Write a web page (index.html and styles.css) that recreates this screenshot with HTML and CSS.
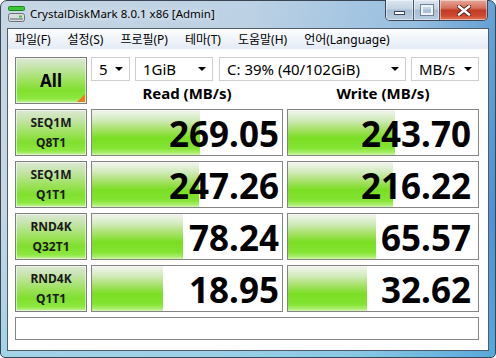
FILE: index.html
```html
<!DOCTYPE html>
<html lang="ko">
<head>
    <meta charset="UTF-8">
    <title>CrystalDiskMark 8.0.1 x86 [Admin]</title>
    <link rel="stylesheet" href="styles.css">
</head>
<body>
    <div class="window">
        <div class="titlebar">
            <svg class="app-icon" width="17" height="17" viewBox="0 0 17 17">
                <rect x="0.5" y="0.5" width="16" height="4" rx="1" fill="#3cc43c" stroke="#1e8a1e"/>
                <rect x="0.5" y="7.5" width="16" height="8" rx="2" fill="#d8dcdf" stroke="#6b7278"/>
                <rect x="2" y="12" width="13" height="2" fill="#9aa1a6"/>
                <rect x="11" y="9.5" width="3" height="2" fill="#3cc43c"/>
            </svg>
            <span class="title">CrystalDiskMark 8.0.1 x86 [Admin]</span>
            <div class="caption-buttons">
                <span class="cap-btn min"><i></i></span>
                <span class="cap-btn max"><i></i></span>
                <span class="cap-btn close">
                    <svg width="14" height="11" viewBox="0 0 14 11">
                        <path d="M2 1.5 L12 9.5 M12 1.5 L2 9.5" stroke="#4a2018" stroke-width="4.2" stroke-linecap="square"/>
                        <path d="M2 1.5 L12 9.5 M12 1.5 L2 9.5" stroke="#fff" stroke-width="2.4" stroke-linecap="square"/>
                    </svg>
                </span>
            </div>
        </div>

        <div class="client">
            <ul class="menubar">
                <li>파일(F)</li>
                <li>설정(S)</li>
                <li>프로필(P)</li>
                <li>테마(T)</li>
                <li>도움말(H)</li>
                <li>언어(Language)</li>
            </ul>

            <div class="board">
                <div class="label all">All</div>
                <div class="top">
                    <div class="combos">
                        <div class="combo c-count">5<span class="arrow"></span></div>
                        <div class="combo c-size">1GiB<span class="arrow"></span></div>
                        <div class="combo c-drive">C: 39% (40/102GiB)<span class="arrow"></span></div>
                        <div class="combo c-unit">MB/s<span class="arrow"></span></div>
                    </div>
                    <div class="heads">
                        <div class="head">Read (MB/s)</div>
                        <div class="head">Write (MB/s)</div>
                    </div>
                </div>

                <div class="label">SEQ1M<br>Q8T1</div>
                <div class="value read" style="--bar: 108px">269.05</div>
                <div class="value write" style="--bar: 107px">243.70</div>

                <div class="label">SEQ1M<br>Q1T1</div>
                <div class="value read" style="--bar: 107px">247.26</div>
                <div class="value write" style="--bar: 105px">216.22</div>

                <div class="label">RND4K<br>Q32T1</div>
                <div class="value read" style="--bar: 91px">78.24</div>
                <div class="value write" style="--bar: 88px">65.57</div>

                <div class="label">RND4K<br>Q1T1</div>
                <div class="value read" style="--bar: 71px">18.95</div>
                <div class="value write" style="--bar: 79px">32.62</div>

                <div class="comment"></div>
            </div>
        </div>
    </div>
</body>
</html>
```

FILE: styles.css
```css
body {
    margin: 0;
    padding: 0;
    font-family: "Noto Sans", "Noto Sans CJK KR", sans-serif;
    color: #000;
    background: #fff;
}

.window {
    width: 496px;
    height: 358px;
    box-sizing: border-box;
    border: 1px solid #3a4654;
    border-radius: 7px 7px 5px 5px;
    padding: 0 6px 6px 6px;
    background:
        linear-gradient(to bottom, rgba(255, 255, 255, 0) 60%, rgba(120, 210, 235, 0.45) 100%),
        linear-gradient(100deg, #c6d6e4 0%, #bcd1e4 45%, #96bfe0 75%, #5b9ad2 92%, #3f86cc 100%);
    display: flex;
    flex-direction: column;
}

/* title bar */
.titlebar {
    height: 27px;
    display: flex;
    align-items: center;
    padding-left: 1px;
}

.app-icon {
    margin-top: -1px;
}

.title {
    margin-left: 5px;
    font-size: 11.5px;
    margin-top: -2px;
    text-shadow: 0 0 6px rgba(255, 255, 255, 0.9);
}

.caption-buttons {
    margin-left: auto;
    margin-right: 1px;
    align-self: flex-start;
    margin-top: -1px;
    display: flex;
    height: 20px;
    border: 1px solid #3b4758;
    border-top: none;
    border-radius: 0 0 5px 5px;
    overflow: hidden;
}

.cap-btn {
    height: 20px;
    display: flex;
    align-items: center;
    justify-content: center;
    background: linear-gradient(to bottom, #dce6f0 0%, #c3d3e3 45%, #a7bed4 50%, #b9cde0 100%);
    box-shadow: inset 0 0 0 1px rgba(255, 255, 255, 0.45);
}

.cap-btn.min {
    width: 27px;
    border-right: 1px solid #4a5668;
}

.cap-btn.max {
    width: 25px;
    border-right: 1px solid #4a5668;
}

.cap-btn.close {
    width: 47px;
    background: linear-gradient(to bottom, #e6a79a 0%, #d7705c 40%, #c23a22 52%, #cf4a30 80%, #e07a5c 100%);
}

.cap-btn.min i {
    display: block;
    width: 9px;
    height: 2px;
    margin-top: 5px;
    background: #fff;
    border: 1px solid #3c4656;
}

.cap-btn.max i {
    display: block;
    width: 8px;
    height: 6px;
    border: 2px solid #eef3f8;
    outline: 1px solid #6f8196;
}

/* client area */
.client {
    flex: 1;
    border: 1px solid #505c6a;
    background: #fff;
    display: flex;
    flex-direction: column;
}

.menubar {
    list-style: none;
    margin: 0;
    padding: 0 0 0 6px;
    height: 20px;
    display: flex;
    align-items: center;
    gap: 15px;
    font-size: 12px;
    background: linear-gradient(to bottom, #fcfdfe 0%, #eef3f9 60%, #e4ebf4 100%);
}

.menubar li {
    padding: 0 1px;
}

.board {
    flex: 1;
    padding: 8px 7px 8px 7px;
    display: grid;
    grid-template-columns: 72px 192px 192px;
    grid-template-rows: 47px 47px 47px 47px 47px 23px;
    column-gap: 4px;
    row-gap: 5px;
}

.label {
    box-sizing: border-box;
    border: 1px solid #7d7d7d;
    box-shadow: inset 0 0 0 1px rgba(255, 255, 255, 0.55);
    background: linear-gradient(to bottom, #dde8d6 0%, #c0e4a0 25%, #9ee25e 50%, #80df2e 72%, #8ce83e 90%, #c4f09a 100%);
    display: flex;
    align-items: center;
    justify-content: center;
    text-align: center;
    font-weight: bold;
    font-size: 12px;
    line-height: 20px;
    color: #1a1a1a;
}

.label.all {
    position: relative;
    font-size: 17px;
    color: #000;
}

.label.all::after {
    content: "";
    position: absolute;
    right: 1px;
    bottom: 1px;
    border-style: solid;
    border-width: 0 0 8px 8px;
    border-color: transparent transparent #f07a1e transparent;
}

.top {
    grid-column: 2 / 4;
    display: flex;
    flex-direction: column;
}

.combos {
    height: 24px;
    display: flex;
}

.combo {
    box-sizing: border-box;
    height: 24px;
    border: 1px solid #cfcfcf;
    background: #fff;
    display: flex;
    align-items: center;
    padding: 0 6px 0 7px;
    font-size: 15px;
}

.c-count { width: 39px; }
.c-size { width: 78px; margin-left: 5px; }
.c-drive { width: 187px; margin-left: 6px; }
.c-unit { width: 68px; margin-left: 5px; }

.arrow {
    margin-left: auto;
    border-style: solid;
    border-width: 4px 4px 0 4px;
    border-color: #000 transparent transparent transparent;
}

.heads {
    flex: 1;
    display: grid;
    grid-template-columns: 192px 192px;
    column-gap: 4px;
}

.head {
    text-align: center;
    font-weight: bold;
    font-size: 15px;
    line-height: 23px;
    padding-top: 1px;
}

.value {
    box-sizing: border-box;
    border: 1px solid #858585;
    background-color: #fff;
    background-image: linear-gradient(to bottom, #f3f5f1 0%, #d2ebbc 22%, #a2e060 45%, #7ade24 62%, #84e432 85%, #a8ee6c 95%, #d4f6b2 100%);
    background-repeat: no-repeat;
    background-size: var(--bar) 100%;
    display: flex;
    align-items: center;
    justify-content: flex-end;
    font-weight: bold;
    font-size: 35px;
    line-height: 1;
    padding-top: 1px;
}

.value.read {
    padding-right: 3px;
}

.value.write {
    padding-right: 7px;
}

.comment {
    grid-column: 1 / 4;
    border: 1px solid #858585;
    background: #fff;
}
```
